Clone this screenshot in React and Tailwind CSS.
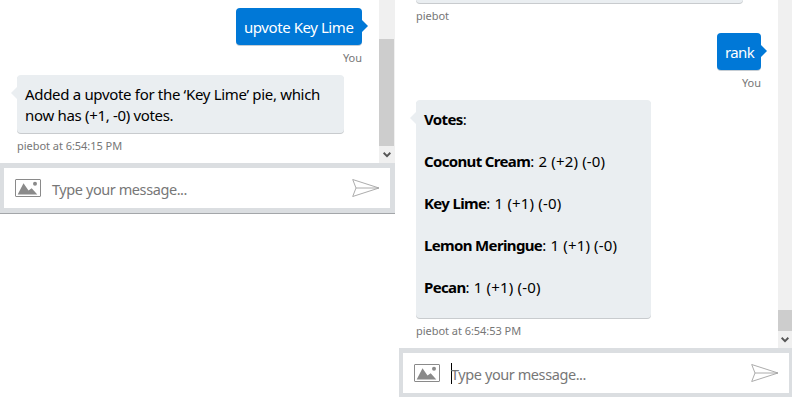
const FONT = "font-['Noto_Sans','Open_Sans',sans-serif]";

function ImageIcon() {
  return (
    <svg className="block shrink-0" width="26" height="18" viewBox="0 0 26 18">
      <rect x="0.5" y="0.5" width="25" height="17" rx="0.5" fill="#fff" stroke="#8a8a8a" />
      <path d="M2.7 15.5 8.5 4.2l5 7.3 3.2-2.3 5.6 6.3z" fill="#8a8a8a" />
      <circle cx="20" cy="4.8" r="2" fill="#8a8a8a" />
    </svg>
  );
}

function SendIcon() {
  return (
    <svg className="block shrink-0" width="28" height="18" viewBox="0 0 28 18" fill="none" stroke="#a3a3a3" strokeWidth="0.9">
      <path d="M0.7 0.5 27 9 0.7 17.5 4 9zM4 9H27" />
    </svg>
  );
}

function Composer({ focused, className }) {
  return (
    <div className={`flex border-[#dbdee1] ${className}`}>
      <div className="flex h-10 grow items-center bg-white pl-[11px] pr-[10px]">
        <ImageIcon />
        <div className={`ml-[11px] h-[21px] w-px ${focused ? "bg-black" : "bg-transparent"}`} />
        <span className="-ml-px mt-px grow whitespace-nowrap text-[14.5px] leading-5 tracking-[-0.42px] text-[#777]">Type your message...</span>
        <SendIcon />
      </div>
    </div>
  );
}

function ScrollBar({ thumb, className }) {
  return (
    <div className={`flex shrink-0 flex-col justify-end bg-[#f0f0f0] ${className}`}>
      <div className={`w-[15px] max-w-full bg-[#cdcdcd] ${thumb}`} />
      <div className="flex h-[17px] w-[15px] max-w-full items-center justify-center pt-px">
        <svg width="8" height="6" viewBox="0 0 8 6" fill="none" stroke="#555" strokeWidth="2">
          <path d="M0.6 0.8 4 4.2 7.4 0.8" />
        </svg>
      </div>
    </div>
  );
}

function Sent({ children, className }) {
  return (
    <div className={`relative h-[37px] self-end whitespace-nowrap rounded-sm bg-[#0078d7] pl-2 pt-[9px] text-[15px] leading-[21px] text-white shadow-[0_1px_0_#c5cdd4] ${className}`}>
      {children}
      <svg className="absolute left-full top-3" width="6" height="12" viewBox="0 0 6 12">
        <path d="M0 0 6 6 0 12z" fill="#0078d7" />
      </svg>
    </div>
  );
}

function Received({ children, className }) {
  return (
    <div className={`relative rounded-sm bg-[#eaeef1] pl-2 text-[15px] leading-[21px] text-black shadow-[0_1px_0_#c8cbce] ${className}`}>
      <svg className="absolute right-full top-3" width="6" height="12" viewBox="0 0 6 12">
        <path d="M6 0 0 6 6 12z" fill="#eaeef1" />
      </svg>
      {children}
    </div>
  );
}

function Meta({ children, className }) {
  return <div className={`whitespace-nowrap text-[11px] leading-4 tracking-[-0.04px] text-[#767676] ${className}`}>{children}</div>;
}

const votes = [
  ["Coconut Cream", "2 (+2) (-0)"],
  ["Key Lime", "1 (+1) (-0)"],
  ["Lemon Meringue", "1 (+1) (-0)"],
  ["Pecan", "1 (+1) (-0)"],
];

export default function App() {
  return (
    <div className={`flex h-[403px] w-[799px] items-start gap-1 overflow-hidden bg-white ${FONT}`}>
      <section className="w-[395px] shrink-0">
        <div className="flex h-[163px]">
          <div className="flex grow flex-col pl-[17px] pr-[17px] pt-2">
            <Sent className="w-[126px] tracking-[-0.43px]">upvote Key Lime</Sent>
            <Meta className="mt-[5px] self-end">You</Meta>
            <Received className="mt-[9px] h-[58px] w-[327px] whitespace-nowrap pt-[9px] tracking-[-0.32px]">
              <div>Added a upvote for the ‘Key Lime’ pie, which</div>
              <div>now has (+1, -0) votes.</div>
            </Received>
            <Meta className="mt-[5px]">piebot at 6:54:15 PM</Meta>
          </div>
          <ScrollBar className="w-4" thumb="h-[107px]" />
        </div>
        <Composer className="border-b-[5px] border-l-4 border-r-[5px] border-t-[5px]" />
        <div className="h-px bg-[#a3a6a9]" />
      </section>
      <section className="w-[393px] shrink-0">
        <div className="flex h-[348px]">
          <div className="flex grow flex-col pl-[17px] pr-[17px]">
            <Received className="-mt-[37px] h-10 w-[327px]" />
            <Meta className="mt-[5px]">piebot</Meta>
            <Sent className="mt-[9px] w-11 tracking-[-0.6px]">rank</Sent>
            <Meta className="mt-[5px] self-end">You</Meta>
            <Received className="mt-[9px] flex h-[218px] w-[235px] flex-col gap-[21px] whitespace-nowrap pt-[9px]">
              <div className="tracking-[-0.62px]"><b>Votes</b>:</div>
              {votes.map(([name, score]) => (
                <div key={name}>
                  <b className="tracking-[-0.65px]">{name}</b>
                  <span className="tracking-[0.17px]">: {score}</span>
                </div>
              ))}
            </Received>
            <Meta className="mt-[5px]">piebot at 6:54:53 PM</Meta>
          </div>
          <ScrollBar className="w-[14px]" thumb="h-[21px]" />
        </div>
        <Composer focused className="border-b-4 border-l-4 border-r-[3px] border-t-[5px]" />
      </section>
    </div>
  );
}
